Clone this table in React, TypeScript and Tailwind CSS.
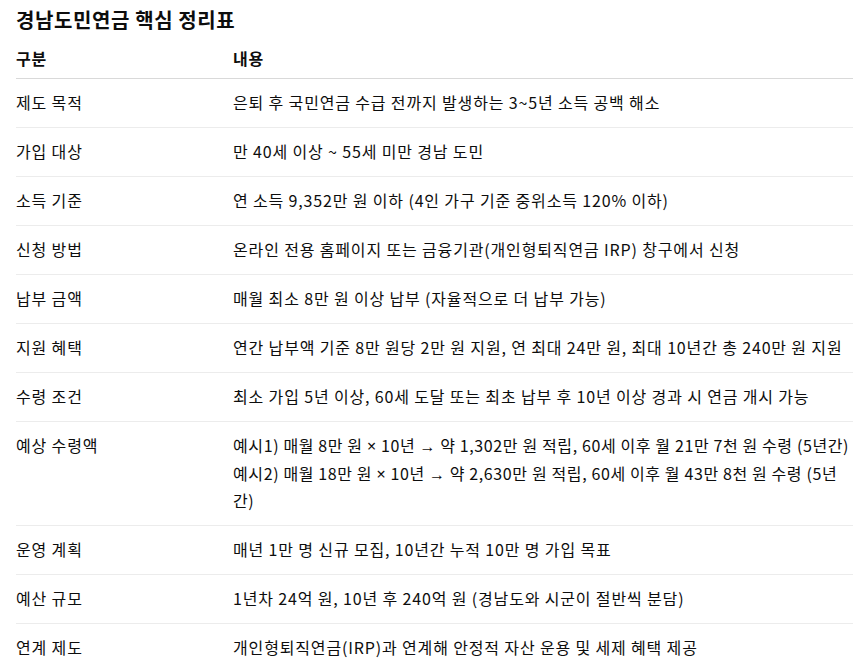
import type { ReactNode } from "react";

const Sym = ({ children }: { children: ReactNode }) => (
  <span style={{ fontFamily: '"Noto Sans", sans-serif' }}>{children}</span>
);

const rows: { label: string; content: ReactNode[]; tight?: boolean }[] = [
  { label: "제도 목적", content: ["은퇴 후 국민연금 수급 전까지 발생하는 3~5년 소득 공백 해소"] },
  { label: "가입 대상", content: ["만 40세 이상 ~ 55세 미만 경남 도민"] },
  { label: "소득 기준", content: ["연 소득 9,352만 원 이하 (4인 가구 기준 중위소득 120% 이하)"] },
  { label: "신청 방법", content: ["온라인 전용 홈페이지 또는 금융기관(개인형퇴직연금 IRP) 창구에서 신청"] },
  { label: "납부 금액", content: ["매월 최소 8만 원 이상 납부 (자율적으로 더 납부 가능)"] },
  { label: "지원 혜택", content: ["연간 납부액 기준 8만 원당 2만 원 지원, 연 최대 24만 원, 최대 10년간 총 240만 원 지원"] },
  { label: "수령 조건", content: ["최소 가입 5년 이상, 60세 도달 또는 최초 납부 후 10년 이상 경과 시 연금 개시 가능"] },
  {
    label: "예상 수령액",
    tight: true,
    content: [
      <>
        예시1) 매월 8만 원 <Sym>×</Sym> 10년 <Sym>→</Sym> 약 1,302만 원 적립, 60세 이후 월 21만 7천 원 수령 (5년간)
      </>,
      <>
        예시2) 매월 18만 원 <Sym>×</Sym> 10년 <Sym>→</Sym> 약 2,630만 원 적립, 60세 이후 월 43만 8천 원 수령 (5년간)
      </>,
    ],
  },
  { label: "운영 계획", content: ["매년 1만 명 신규 모집, 10년간 누적 10만 명 가입 목표"] },
  { label: "예산 규모", content: ["1년차 24억 원, 10년 후 240억 원 (경남도와 시군이 절반씩 분담)"] },
  { label: "연계 제도", content: ["개인형퇴직연금(IRP)과 연계해 안정적 자산 운용 및 세제 혜택 제공"] },
];

export default function App() {
  return (
    <div
      className="min-h-screen bg-white pl-4 pt-[6px] text-[#0d0d0d]"
      style={{ fontFamily: '"Noto Sans CJK KR", "Noto Sans", sans-serif' }}
    >
      <h2 className="text-[20px] font-bold leading-[28px] tracking-[0.6px]">경남도민연금 핵심 정리표</h2>

      <table className="mt-[4px] w-[837px] table-fixed border-collapse text-[16px] leading-[26.5px] tracking-[0.85px]">
        <colgroup>
          <col className="w-[217px]" />
          <col />
        </colgroup>
        <thead>
          <tr className="border-b border-[#d9d9d9]">
            <th className="pt-[7px] pb-[6px] text-left font-bold">구분</th>
            <th className="pt-[7px] pb-[6px] text-left font-bold">내용</th>
          </tr>
        </thead>
        <tbody>
          {rows.map((row, i) => (
            <tr key={row.label} className={i < rows.length - 1 ? "border-b border-[#ececec]" : ""}>
              <td className="py-[10.75px] align-top">{row.label}</td>
              <td className={row.tight ? "py-[10.75px] align-top tracking-[0.62px]" : "py-[10.75px] align-top"}>
                {row.content.map((line, j) => (
                  <div key={j}>{line}</div>
                ))}
              </td>
            </tr>
          ))}
        </tbody>
      </table>
    </div>
  );
}
